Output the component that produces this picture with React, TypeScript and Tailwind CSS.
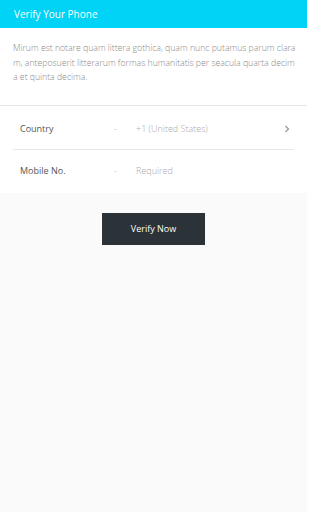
import React from "react";

export default function App() {
  return (
    <div className="w-[307px] h-[512px] bg-[#fafafa] flex flex-col" style={{ fontFamily: '"Open Sans", sans-serif' }}>
      <div className="h-[28px] bg-[#00d3f5] flex items-center px-[14px]">
        <span className="text-white text-[10px]">Verify Your Phone</span>
      </div>
      <div className="bg-white pl-[13px] pr-[10px] pt-[13px] h-[78px] border-b border-[#e8e8e8]">
        <p className="text-[#8a8a8a] text-[8.7px] leading-[14.5px] font-light break-all">
          Mirum est notare quam littera gothica, quam nunc putamus parum claram, anteposuerit litterarum formas humanitatis per seacula quarta decima et quinta decima.
        </p>
      </div>
      <div className="bg-white px-[13px] pb-[2px]">
        <div className="h-[44px] flex items-center border-b border-[#e8e8e8] text-[9px] pt-[2px]">
          <span className="w-[101px] pl-[7px] text-[#555]">Country</span>
          <span className="w-[22px] text-[#ccc]">-</span>
          <span className="flex-1 text-[#aaa] font-light">+1 (United States)</span>
          <svg width="6" height="8" viewBox="0 0 6 8" className="mr-[4px]">
            <path d="M1.5 1 L4.5 4 L1.5 7" fill="none" stroke="#999" strokeWidth="1.3" />
          </svg>
        </div>
        <div className="h-[41px] flex items-center text-[9px]">
          <span className="w-[101px] pl-[7px] text-[#555]">Mobile No.</span>
          <span className="w-[22px] text-[#ccc]">-</span>
          <span className="flex-1 text-[#aaa] font-light">Required</span>
        </div>
      </div>
      <div className="flex justify-center pt-[20px]">
        <button className="w-[103px] h-[32px] bg-[#2b3238] text-white text-[9px]">Verify Now</button>
      </div>
    </div>
  );
}
